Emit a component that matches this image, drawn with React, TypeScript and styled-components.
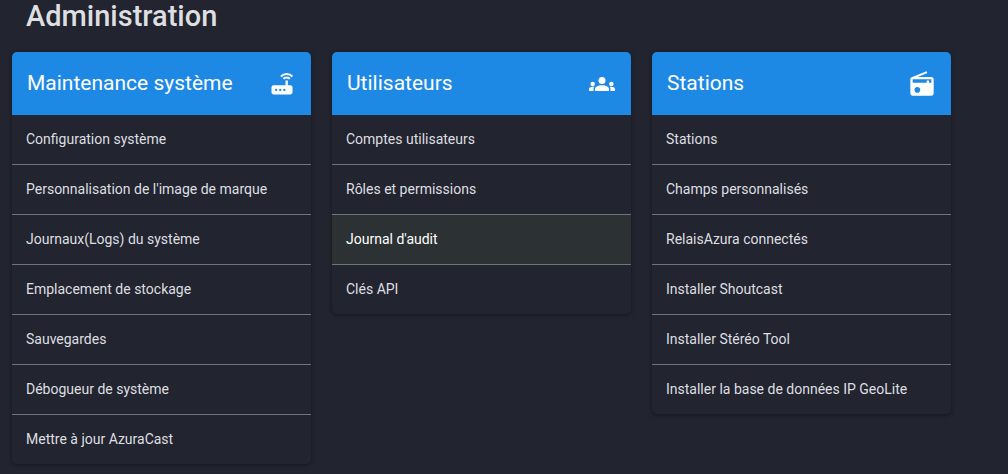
import React from "react";
import styled, { createGlobalStyle } from "styled-components";

const GlobalStyle = createGlobalStyle`
  *, *::before, *::after { box-sizing: border-box; }
  body {
    margin: 0;
    background: #22242f;
    color: #dedfe1;
    font-family: Roboto, sans-serif;
    font-size: 14px;
    line-height: 21px;
  }
`;

const Page = styled.main`
  padding: 0 57px 10px 12px;
`;

const Title = styled.h1`
  margin: 0 0 20px;
  padding: 0 14px;
  font-size: 29px;
  font-weight: 500;
  line-height: 32px;
`;

const Grid = styled.div`
  display: grid;
  grid-template-columns: repeat(3, minmax(0, 1fr));
  align-items: start;
  gap: 21px;
`;

const Card = styled.section`
  overflow: hidden;
  border-radius: 5px;
  background: #22242f;
  box-shadow: 0 1px 4px rgba(0, 0, 0, 0.4);
`;

const CardHeader = styled.header`
  display: flex;
  align-items: flex-start;
  justify-content: space-between;
  padding: 18px 15px 17px;
  background: #1e88e5;
  color: #fff;
`;

const CardTitle = styled.h2`
  margin: 0;
  font-size: 21px;
  font-weight: 400;
  line-height: 26px;
`;

const Icon = styled.svg`
  flex: none;
  width: 28px;
  height: 28px;
  fill: currentColor;
`;

const List = styled.ul`
  margin: 0;
  padding: 0;
  list-style: none;
`;

const Item = styled.li`
  & + & { border-top: 1px solid #6c757d; }
`;

const ItemLink = styled.a<{ $active?: boolean }>`
  display: block;
  padding: 14px;
  color: ${(p) => (p.$active ? "#fff" : "inherit")};
  background: ${(p) => (p.$active ? "#2c3134" : "transparent")};
  text-decoration: none;
`;

const RouterIcon = () => (
  <Icon viewBox="0 -960 960 960" aria-hidden="true">
    <path d="M200-120q-33 0-56.5-23.5T120-200v-160q0-33 23.5-56.5T200-440h400v-160h80v160h80q33 0 56.5 23.5T840-360v160q0 33-23.5 56.5T760-120H200Zm80-120q17 0 28.5-11.5T320-280q0-17-11.5-28.5T280-320q-17 0-28.5 11.5T240-280q0 17 11.5 28.5T280-240Zm140 0q17 0 28.5-11.5T460-280q0-17-11.5-28.5T420-320q-17 0-28.5 11.5T380-280q0 17 11.5 28.5T420-240Zm140 0q17 0 28.5-11.5T600-280q0-17-11.5-28.5T560-320q-17 0-28.5 11.5T520-280q0 17 11.5 28.5T560-240Z" />
    <path
      d="M444-740Q526-822 640-822T836-740M530-656Q576-702 640-702T750-656"
      fill="none"
      stroke="currentColor"
      strokeWidth="72"
    />
  </Icon>
);

const GroupsIcon = () => (
  <Icon viewBox="0 0 24 24" aria-hidden="true">
    <circle cx="12" cy="9" r="3" />
    <circle cx="4" cy="12" r="1.9" />
    <circle cx="20" cy="12" r="1.9" />
    <path d="M6 18v-1.6c0-1 .6-1.8 1.5-2.3 1.3-.7 2.8-1.1 4.5-1.1s3.2.4 4.5 1.1c.9.5 1.5 1.3 1.5 2.3V18z" />
    <path d="M.9 18v-1.5c0-.8.4-1.4 1.1-1.7.9-.4 2-.6 3.3-.4-.4.6-.6 1.3-.6 2V18zM23.1 18v-1.5c0-.8-.4-1.4-1.1-1.7-.9-.4-2-.6-3.3-.4.4.6.6 1.3.6 2V18z" />
  </Icon>
);

const RadioIcon = () => (
  <Icon viewBox="0 -960 960 960" aria-hidden="true">
    <path d="M160-80q-33 0-56.5-23.5T80-160v-480q0-25 13.5-45t36.5-29l506-206 26 66-330 134h468q33 0 56.5 23.5T880-640v480q0 33-23.5 56.5T800-80H160Zm160-100q42 0 71-29.5t29-70.5q0-42-29-71t-71-29q-42 0-71 29t-29 71q0 41 29 70.5t71 29.5ZM160-520h480v-80h80v80h80v-120H160v120Z" />
  </Icon>
);

interface Section {
  title: string;
  icon: React.ComponentType;
  items: string[];
}

const sections: Section[] = [
  {
    title: "Maintenance système",
    icon: RouterIcon,
    items: [
      "Configuration système",
      "Personnalisation de l'image de marque",
      "Journaux(Logs) du système",
      "Emplacement de stockage",
      "Sauvegardes",
      "Débogueur de système",
      "Mettre à jour AzuraCast",
    ],
  },
  {
    title: "Utilisateurs",
    icon: GroupsIcon,
    items: ["Comptes utilisateurs", "Rôles et permissions", "Journal d'audit", "Clés API"],
  },
  {
    title: "Stations",
    icon: RadioIcon,
    items: [
      "Stations",
      "Champs personnalisés",
      "RelaisAzura connectés",
      "Installer Shoutcast",
      "Installer Stéréo Tool",
      "Installer la base de données IP GeoLite",
    ],
  },
];

const activeItem = "Journal d'audit";

export default function App() {
  return (
    <>
      <GlobalStyle />
      <Page>
        <Title>Administration</Title>
        <Grid>
          {sections.map(({ title, icon: SectionIcon, items }) => (
            <Card key={title}>
              <CardHeader>
                <CardTitle>{title}</CardTitle>
                <SectionIcon />
              </CardHeader>
              <List>
                {items.map((item) => (
                  <Item key={item}>
                    <ItemLink href="#" $active={item === activeItem}>
                      {item}
                    </ItemLink>
                  </Item>
                ))}
              </List>
            </Card>
          ))}
        </Grid>
      </Page>
    </>
  );
}
